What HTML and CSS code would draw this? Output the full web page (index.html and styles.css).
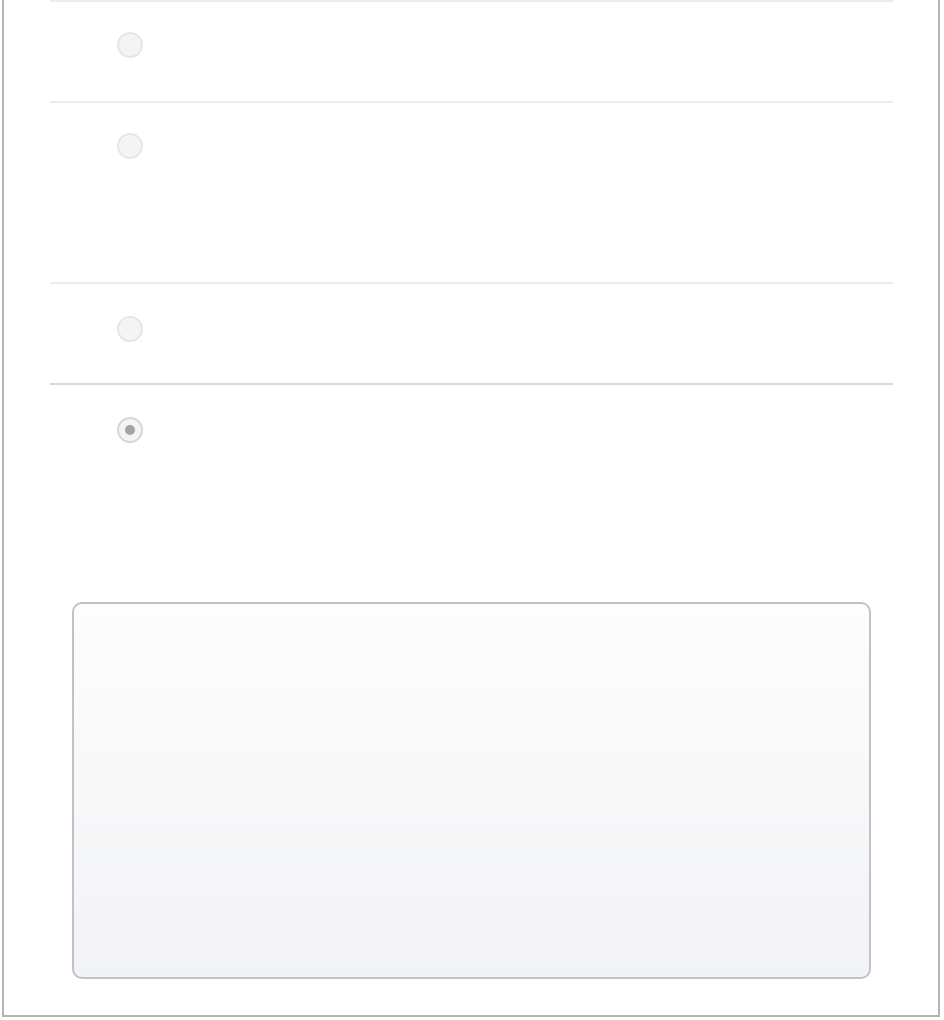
FILE: index.html
```html
<!DOCTYPE html>
<html lang="en">
<head>
    <meta charset="UTF-8">
    <meta name="viewport" content="width=device-width, initial-scale=1.0">
    <title>Options</title>
    <link rel="stylesheet" href="styles.css">
</head>
<body>
    <div class="frame">
        <div class="options">
            <div class="option">
                <span class="radio"></span>
            </div>
            <div class="option option-tall">
                <span class="radio"></span>
            </div>
            <div class="option option-low">
                <span class="radio"></span>
            </div>
            <div class="option option-last">
                <span class="radio checked"></span>
            </div>
        </div>
        <div class="panel"></div>
    </div>
</body>
</html>
```

FILE: styles.css
```css
body {
    margin: 0;
    background: #fff;
    font-family: "Liberation Sans", Arial, sans-serif;
}

.frame {
    margin-left: 2px;
    margin-bottom: 3px;
    width: 938px;
    height: 1017px;
    box-sizing: border-box;
    border: 2px solid #b4b4b4;
    border-top: none;
}

.options {
    margin-left: 46px;
    width: 843px;
}

.option {
    border-top: 2px solid #ececec;
    height: 101px;
    box-sizing: border-box;
    padding: 30px 0 0 67px;
}

.option-tall {
    height: 181px;
}

.option-low {
    padding-top: 32px;
}

.option-last {
    border-top-color: #dadada;
    height: 219px;
    padding-top: 32px;
}

.radio {
    display: flex;
    align-items: center;
    justify-content: center;
    width: 26px;
    height: 26px;
    box-sizing: border-box;
    border-radius: 50%;
    border: 2px solid #e6e6e6;
    background: #f4f4f4;
}

.radio.checked {
    border-color: #d6d6d6;
}

.radio.checked::after {
    content: "";
    width: 10px;
    height: 10px;
    border-radius: 50%;
    background: #a4a4a4;
}

.panel {
    margin-left: 68px;
    width: 799px;
    height: 377px;
    box-sizing: border-box;
    border: 2px solid #bcc3cb;
    border-radius: 10px;
    background: linear-gradient(#fdfdfd, #f2f3f5);
}
```
